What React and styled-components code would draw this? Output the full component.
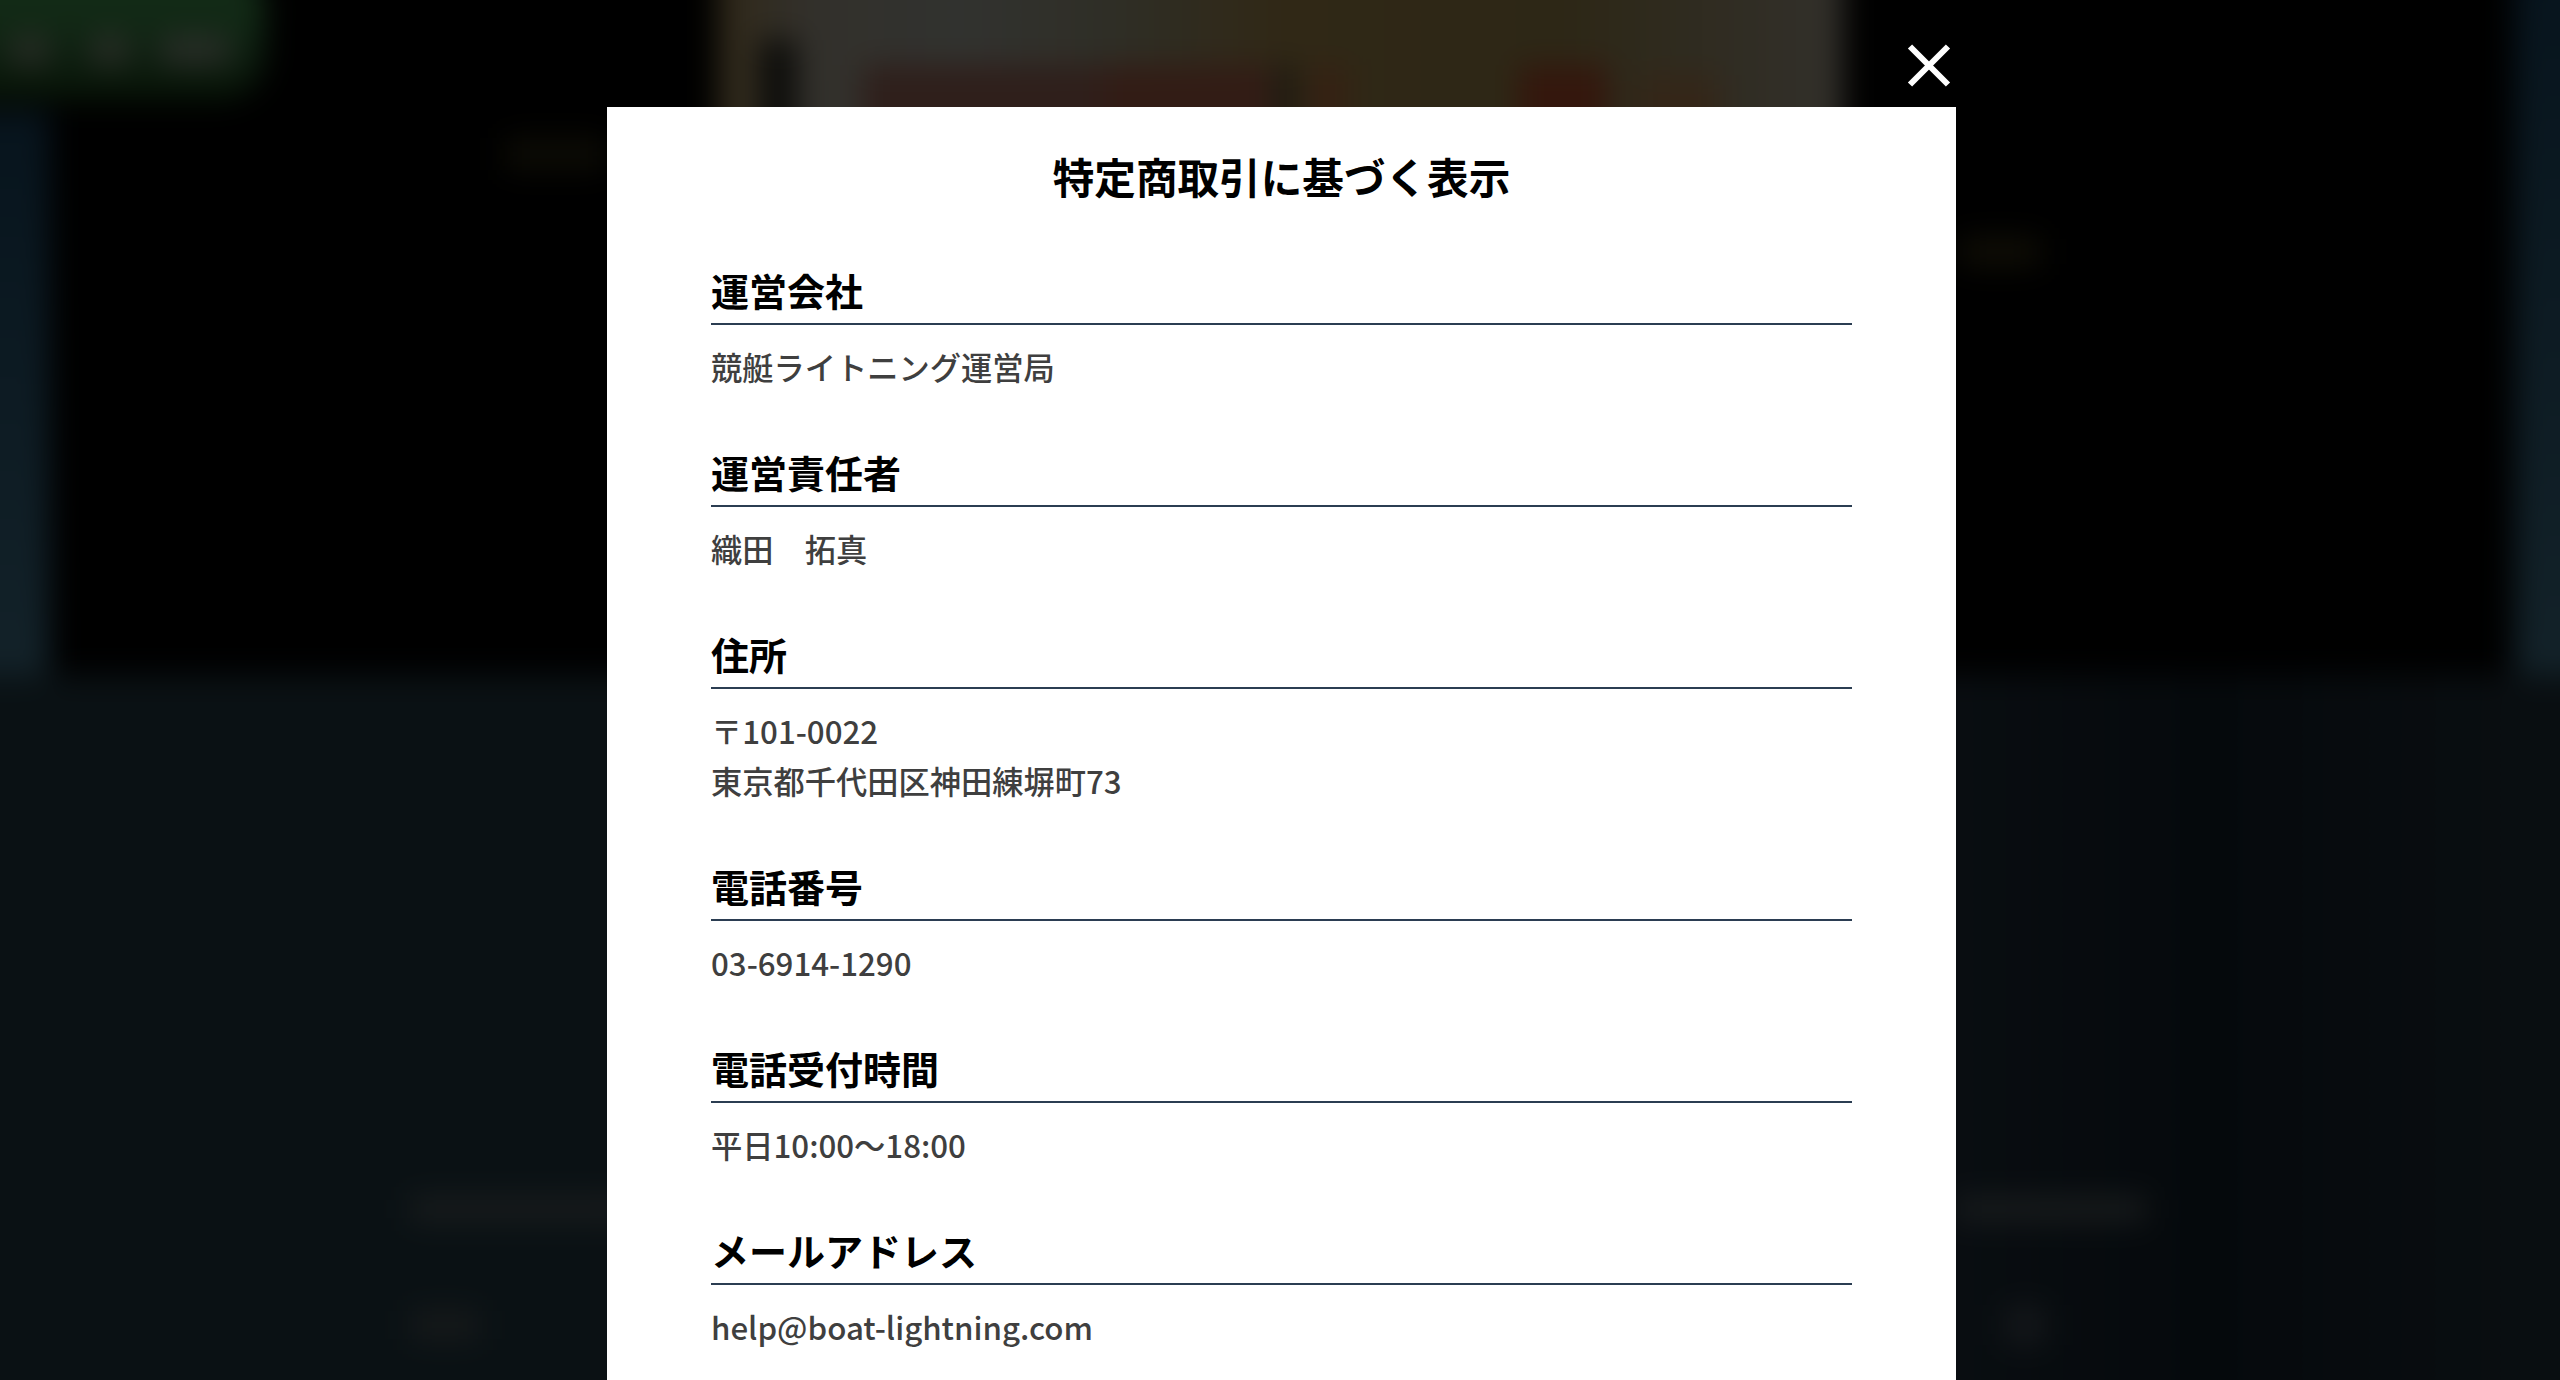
import React from 'react';
import styled, { createGlobalStyle } from 'styled-components';

// flat smudge of colour for the blurred site behind the modal
const smudge = (color, x, y, w, h) =>
  `linear-gradient(${color}, ${color}) ${x}px ${y}px / ${w}px ${h}px no-repeat`;

const GlobalStyle = createGlobalStyle`
  html, body {
    margin: 0;
    height: 100%;
    background: #000;
  }
  #root {
    height: 100%;
  }
`;

const Page = styled.div`
  position: relative;
  height: 100vh;
  overflow: hidden;
  font-family: "Noto Sans CJK JP", "Noto Sans", sans-serif;
`;

// pulled out past the window so the blur keeps to the edges
const Backdrop = styled.div`
  height: calc(100% + 80px);
  margin: -40px;
  display: flex;
  flex-direction: column;
  filter: blur(15px);
  background: #0b1115;
`;

const TopBand = styled.div`
  height: 715px;
  flex: none;
  display: grid;
  grid-template-columns: 90px 668px 1125px 1fr 86px;
  grid-template-rows: 150px 1fr;
  background:
    ${smudge('#0d0c05', 545, 178, 100, 32)},
    ${smudge('#110f06', 2000, 278, 80, 27)},
    #000;
`;

const GreenButton = styled.div`
  grid-column: 1 / 3;
  grid-row: 1;
  z-index: 1;
  width: 305px;
  height: 140px;
  border-radius: 0 44px 44px 0;
  background:
    ${smudge('#262b24', 50, 75, 40, 30)},
    ${smudge('#272c25', 130, 75, 40, 30)},
    ${smudge('#282d27', 200, 75, 70, 30)},
    linear-gradient(#122a16 40%, #0c1c0e 75%, #081507);
`;

const SideStrip = styled.div`
  grid-column: ${p => p.$column};
  grid-row: ${p => p.$row};
  background: linear-gradient(#07141d, #132229);
`;

const Banner = styled.div`
  grid-column: 3;
  grid-row: 1 / 3;
  height: 190px;
  background:
    ${smudge('#0c0c0a', 42, 80, 36, 110)},
    ${smudge('#2f1f1b', 145, 105, 240, 85)},
    ${smudge('#321c15', 385, 105, 170, 85)},
    ${smudge('#171710', 560, 105, 16, 85)},
    ${smudge('#352113', 590, 105, 40, 85)},
    ${smudge('#34170d', 800, 105, 90, 85)},
    ${smudge('#342618', 920, 115, 80, 75)},
    linear-gradient(90deg, #302818, #32302b 8%, #31322f 22%, #2f2e26 35%, #302816 50%, #2d2716 75%, #32302b);
`;

const BottomBand = styled.div`
  flex: 1;
  background:
    ${smudge('#191c1d', 450, 522, 220, 24)},
    ${smudge('#191c1d', 1996, 522, 190, 24)},
    ${smudge('#16191a', 450, 635, 70, 30)},
    ${smudge('#14171a', 2045, 630, 40, 40)},
    linear-gradient(90deg, #0a1114, #0a1114 22%, #111517 48%, #0b1014 70%, #05090c 85%, #0a0f12);
`;

const Overlay = styled.div`
  position: absolute;
  inset: 0;
  display: flex;
  flex-direction: column;
  align-items: center;
  padding: 107px 0 0 3px;
`;

const Modal = styled.section`
  position: relative;
  width: 1349px;
  box-sizing: border-box;
  padding: 0 104px;
  background: #fff;
`;

const CloseButton = styled.button`
  position: absolute;
  top: -64px;
  right: 5px;
  width: 44px;
  height: 45px;
  padding: 0;
  border: 0;
  background: none;
  cursor: pointer;
  svg {
    display: block;
  }
`;

const Title = styled.h2`
  margin: 0;
  padding: 38px 0 57px;
  text-align: center;
  color: #000;
  font-size: 41.6px;
  font-weight: 700;
  line-height: 62px;
`;

const Section = styled.div`
  margin-bottom: 54.4px;
`;

const Heading = styled.h3`
  margin: 0 0 17px;
  padding-bottom: 7px;
  border-bottom: 2px solid #2b3d52;
  color: #000;
  font-size: 38px;
  font-weight: 700;
  line-height: 52px;
`;

const Body = styled.p`
  margin: 0;
  color: #3f3f3f;
  font-size: 31.25px;
  font-weight: 500;
  line-height: 49.6px;
`;

const rows = [
  { head: '運営会社', lines: ['競艇ライトニング運営局'] },
  { head: '運営責任者', lines: ['織田　拓真'] },
  { head: '住所', lines: ['〒101-0022', '東京都千代田区神田練塀町73'] },
  { head: '電話番号', lines: ['03-6914-1290'] },
  { head: '電話受付時間', lines: ['平日10:00〜18:00'] },
  { head: 'メールアドレス', lines: ['help@boat-lightning.com'] },
];

export default function App() {
  return (
    <Page>
      <GlobalStyle />
      <Backdrop>
        <TopBand>
          <GreenButton />
          <SideStrip $column={1} $row={2} />
          <Banner />
          <SideStrip $column={5} $row="1 / 3" />
        </TopBand>
        <BottomBand />
      </Backdrop>
      <Overlay>
        <Modal>
          <CloseButton aria-label="閉じる">
            <svg width="44" height="45" viewBox="0 0 44 45">
              <path d="M3 3.5 41 41.5M41 3.5 3 41.5" stroke="#fff" strokeWidth="6" fill="none" />
            </svg>
          </CloseButton>
          <Title>特定商取引に基づく表示</Title>
          {rows.map(row => (
            <Section key={row.head}>
              <Heading>{row.head}</Heading>
              {row.lines.map(line => (
                <Body key={line}>{line}</Body>
              ))}
            </Section>
          ))}
        </Modal>
      </Overlay>
    </Page>
  );
}
